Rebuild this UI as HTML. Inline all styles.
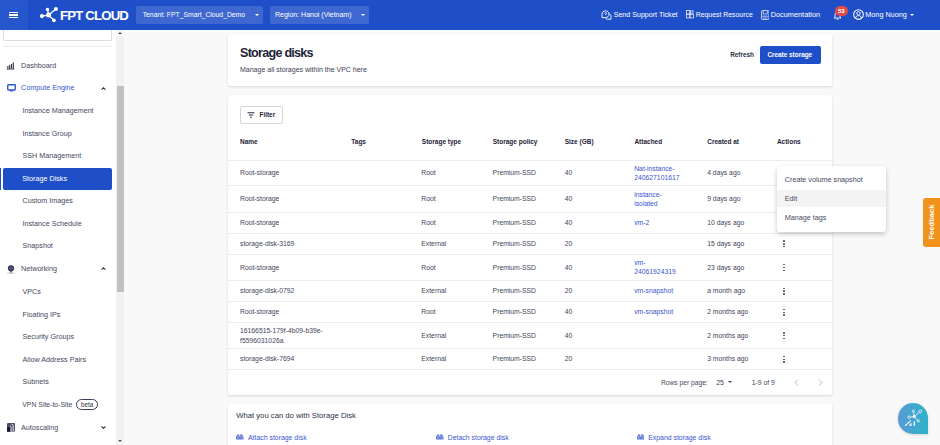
<!DOCTYPE html>
<html><head><meta charset="utf-8">
<style>
*{box-sizing:border-box;margin:0;padding:0}
html,body{width:940px;height:445px;overflow:hidden}
body{position:relative;background:#f9f9f9;font-family:"Liberation Sans",sans-serif;color:#1e2337}
.a{position:absolute}
.t{position:absolute;white-space:nowrap;line-height:10px;height:10px}
#hdr{left:0;top:0;width:940px;height:30px;background:#1f4fc8}
#ham{left:0;top:0;width:28px;height:30px;background:#2656cc}
.hw{color:#fff;font-size:7.1px}
.sel{background:rgba(255,255,255,0.14);border-radius:2px;height:18px;top:5.5px}
#side{left:0;top:30px;width:117px;height:415px;background:#fff}
.si{font-size:7.2px;color:#45485e}
#track{left:116px;top:30px;width:8px;height:415px;background:#f1f1f1}
#thumb{left:116.5px;top:86px;width:7px;height:206px;background:#c1c1c1}
.card{position:absolute;background:#fff;border-radius:2px;box-shadow:0 1px 2.5px rgba(0,0,0,0.14)}
.th{font-size:6.5px;font-weight:700;color:#1e2337}
.td{font-size:6.8px;color:#42455a}
.lk{color:#3a55d0}
.kb{position:absolute;width:2px;height:8px}.kb i{display:block;width:1.5px;height:1.5px;border-radius:50%;background:#4a4d60;margin-bottom:1.3px}
.ln{position:absolute;left:228px;width:604px;height:1px;background:#ececec}
</style></head><body>
<!-- header -->
<div id="hdr" class="a"></div>
<div id="ham" class="a"></div>
<div class="a" style="left:9px;top:11.5px;width:9px;height:1.3px;background:#fff"></div>
<div class="a" style="left:9px;top:14.3px;width:9px;height:1.3px;background:#fff"></div>
<div class="a" style="left:9px;top:17px;width:9px;height:1.3px;background:#fff"></div>
<!-- logo icon -->
<svg class="a" style="left:39px;top:6px" width="20" height="18" viewBox="0 0 20 18">
 <g stroke="#fff" stroke-width="1.3" fill="#fff">
  <line x1="9.6" y1="9.1" x2="2.9" y2="10.1"/><line x1="9.6" y1="9.1" x2="8.5" y2="3.5"/><line x1="9.6" y1="9.1" x2="16.9" y2="2.9"/><line x1="9.6" y1="9.1" x2="14.9" y2="14.3"/>
  <circle cx="9.6" cy="9.1" r="2.5" stroke="none"/><circle cx="2.9" cy="10.1" r="2.05" stroke="none"/><circle cx="8.5" cy="3.5" r="1.7" stroke="none"/><circle cx="16.9" cy="2.9" r="2" stroke="none"/><circle cx="14.9" cy="14.3" r="1.9" stroke="none"/>
 </g>
</svg>
<div class="t" style="left:60px;top:8.8px;font-size:13.2px;line-height:14px;height:14px;font-weight:700;color:#fff;letter-spacing:-0.82px">FPT CLOUD</div>
<div class="a sel" style="left:136px;width:127px"></div>
<div class="t hw" style="left:142.7px;top:9.5px;font-size:6.8px">Tenant: FPT_Smart_Cloud_Demo</div>
<div class="a" style="left:255px;top:13.5px;width:0;height:0;border-left:2.5px solid transparent;border-right:2.5px solid transparent;border-top:2.5px solid #fff"></div>
<div class="a sel" style="left:269.5px;width:99.5px"></div>
<div class="t hw" style="left:275px;top:9.5px;font-size:7px">Region: Hanoi (Vietnam)</div>
<div class="a" style="left:361px;top:13.5px;width:0;height:0;border-left:2.5px solid transparent;border-right:2.5px solid transparent;border-top:2.5px solid #fff"></div>

<div class="t hw" style="left:613.7px;top:9.5px">Send Support Ticket</div>
<div class="t hw" style="left:695.7px;top:9.5px;font-size:6.9px">Request Resource</div>
<div class="t hw" style="left:770.7px;top:9.5px;font-size:7.35px">Documentation</div>
<div class="t hw" style="left:865.3px;top:9.5px;font-size:7.25px">Mong Nuong</div>

<!-- header icons -->
<svg class="a" style="left:600.5px;top:9.5px" width="11" height="10" viewBox="0 0 11 10" fill="none" stroke="#fff" stroke-width="0.9">
 <path d="M1 4.2 C1 2.2 2.6 0.8 4.5 0.8 C6.4 0.8 8 2.2 8 4.2 C8 6.2 6.4 7.6 4.5 7.6 L1 7.6 Z"/>
 <path d="M8.2 3.6 C9.4 4.2 10 5.2 10 6.4 L10 9.2 L6.6 9.2 C5.6 9.2 4.6 8.6 4.2 7.7"/>
 <path d="M3.5 3.4 C3.5 2.6 5.5 2.6 5.5 3.4 C5.5 4.2 4.5 4.2 4.5 5"/>
</svg>
<svg class="a" style="left:685.5px;top:10.3px" width="8" height="8.5" viewBox="0 0 8 8.5" fill="none" stroke="#fff" stroke-width="0.75" opacity="0.92">
 <rect x="0.5" y="0.6" width="3.2" height="3.4"/><rect x="0.5" y="4.3" width="3.2" height="3.6"/><rect x="4.1" y="4.3" width="3.4" height="3.6"/><rect x="4.6" y="0.9" width="2.4" height="2.4"/>
</svg>
<svg class="a" style="left:760.6px;top:9.8px" width="8.5" height="10" viewBox="0 0 8.5 10" opacity="0.92">
 <rect x="0.45" y="0.45" width="7.6" height="9.1" rx="1.4" fill="none" stroke="#fff" stroke-width="0.85"/>
 <path d="M2.2 0.8 V4 H6.3 V0.8" fill="none" stroke="#fff" stroke-width="0.75"/>
 <path d="M0.8 6.2 H7.7 M2 8 H6.5" stroke="#fff" stroke-width="0.7"/>
</svg>
<svg class="a" style="left:833px;top:10.5px" width="9" height="9" viewBox="0 0 9 9" fill="none" stroke="#fff" stroke-width="0.9">
 <path d="M1 7 L2 6 V4 C2 2.5 3 1.5 4.5 1.5 C6 1.5 7 2.5 7 4 V6 L8 7 Z"/><path d="M3.6 8.2 H5.4"/>
</svg>
<div class="a" style="left:835.1px;top:6.2px;width:12.5px;height:9.8px;border-radius:5px;background:#e24a4a"></div>
<div class="t" style="left:841.3px;top:11.1px;font-size:6px;line-height:6px;height:6px;color:#fff;font-weight:700;transform:translate(-50%,-50%)">53</div>
<svg class="a" style="left:852.5px;top:9.2px" width="11" height="11" viewBox="0 0 11 11" fill="none" stroke="#fff" stroke-width="0.9">
 <circle cx="5.5" cy="5.5" r="4.85" stroke-width="1.05"/><circle cx="5.5" cy="4.3" r="1.7"/><path d="M2.6 9 C3 7.4 4 6.6 5.5 6.6 C7 6.6 8 7.4 8.4 9"/>
</svg>
<div class="a" style="left:910.4px;top:13.8px;width:0;height:0;border-left:2.3px solid transparent;border-right:2.3px solid transparent;border-top:2.6px solid #fff"></div>
<div class="a" style="left:124px;top:30px;width:816px;height:2px;background:#fff"></div>
<!-- sidebar -->
<div id="side" class="a"></div>
<div id="track" class="a"></div>
<div id="thumb" class="a"></div>
<div class="a" style="left:3.4px;top:30px;width:108.3px;height:10.7px;border:1px solid #dcdcdc;border-top:none;border-radius:0 0 2px 2px"></div>
<div class="a" style="left:3px;top:45.5px;width:109px;height:1px;background:#ececec"></div>

<div class="t si" style="left:21px;top:61px">Dashboard</div>
<div class="t si" style="left:21px;top:83.4px;color:#3a55d0">Compute Engine</div>
<div class="t si" style="left:22.5px;top:106px">Instance Management</div>
<div class="t si" style="left:22.5px;top:128.5px">Instance Group</div>
<div class="t si" style="left:22.5px;top:151px">SSH Management</div>
<div class="a" style="left:3px;top:167.7px;width:108.7px;height:22.3px;background:#1f4fc8;border-radius:2px"></div>
<div class="a" style="left:0;top:167.7px;width:1px;height:22.3px;background:#1f4fc8"></div>
<div class="t si" style="left:22.3px;top:173.8px;color:#fff">Storage Disks</div>
<div class="t si" style="left:22.5px;top:196px">Custom Images</div>
<div class="t si" style="left:22.5px;top:218.5px">Instance Schedule</div>
<div class="t si" style="left:22.5px;top:241px">Snapshot</div>
<div class="t si" style="left:21px;top:263.7px">Networking</div>
<div class="t si" style="left:22.5px;top:286.6px">VPCs</div>
<div class="t si" style="left:22.5px;top:310px">Floating IPs</div>
<div class="t si" style="left:22.5px;top:331.6px">Security Groups</div>
<div class="t si" style="left:22.5px;top:355px">Allow Address Pairs</div>
<div class="t si" style="left:22.5px;top:376.6px">Subnets</div>
<div class="t si" style="left:22.3px;top:400px;font-size:6.86px">VPN Site-to-Site</div>
<div class="t si" style="left:21px;top:423px">Autoscaling</div>

<!-- sidebar icons -->
<svg class="a" style="left:6.1px;top:61.8px" width="9" height="8" viewBox="0 0 9 8" fill="#3a3d52">
 <rect x="1.3" y="4" width="1.2" height="3"/><rect x="3.1" y="3" width="1.2" height="4"/><rect x="4.9" y="2" width="1.2" height="5"/><rect x="6.7" y="0.5" width="1.2" height="6.5"/><rect x="0.5" y="6.8" width="8" height="0.7"/>
</svg>
<svg class="a" style="left:6.5px;top:83.5px" width="9" height="8" viewBox="0 0 9 8">
 <rect x="0.75" y="0.75" width="7.5" height="5.2" rx="0.6" fill="none" stroke="#2f55d4" stroke-width="1.4"/><rect x="3" y="6.2" width="3" height="1.3" fill="#2f55d4"/>
</svg>
<svg class="a" style="left:101px;top:86.5px" width="5" height="3" viewBox="0 0 5 3"><path d="M0.6 2.6 L2.5 0.8 L4.4 2.6" fill="none" stroke="#2b2f45" stroke-width="1.1"/></svg>
<svg class="a" style="left:7px;top:264.5px" width="8" height="9" viewBox="0 0 8 9">
 <circle cx="4" cy="3.3" r="3.1" fill="#2d3150"/><path d="M4 1 V6 M1.5 3.3 H6.5" stroke="#8a8fa8" stroke-width="0.5"/><rect x="3.5" y="6" width="1" height="1.8" fill="#2d3150"/><rect x="0.2" y="7.8" width="7.6" height="0.6" fill="#9a9db0"/>
</svg>
<svg class="a" style="left:101px;top:266.5px" width="5" height="3" viewBox="0 0 5 3"><path d="M0.6 2.6 L2.5 0.8 L4.4 2.6" fill="none" stroke="#2b2f45" stroke-width="1.1"/></svg>
<div class="a" style="left:76.2px;top:398.9px;width:21.5px;height:11.5px;border:0.8px solid #3a3d52;border-radius:6px"></div>
<div class="t" style="left:81px;top:400px;font-size:6.3px;color:#2b2f45">beta</div>
<svg class="a" style="left:7px;top:423px" width="8" height="9" viewBox="0 0 8 9">
 <rect x="0" y="0" width="8" height="8.8" rx="1.1" fill="#4d5068"/>
 <rect x="0" y="4" width="3.2" height="4.8" rx="0.5" fill="#151833"/>
 <path d="M4.1 8.6 V4.4 Q4.1 3.1 3 3.1 M6.2 8.6 V2.6 Q6.2 1.2 4.6 1.2" fill="none" stroke="#fff" stroke-width="0.85"/>
</svg>
<svg class="a" style="left:100.8px;top:425.8px" width="5" height="3" viewBox="0 0 5 3"><path d="M0.6 0.5 L2.5 2.3 L4.4 0.5" fill="none" stroke="#2b2f45" stroke-width="1.1"/></svg>
<div class="a" style="left:117.5px;top:440px;width:0;height:0;border-left:2px solid transparent;border-right:2px solid transparent;border-top:2.5px solid #555"></div>
<div class="a" style="left:116px;top:30px;width:8px;height:7px;background:#f7f7f7"></div>
<div class="a" style="left:117.5px;top:31.6px;width:0;height:0;border-left:2px solid transparent;border-right:2px solid transparent;border-bottom:2.5px solid #505050"></div>
<!-- card 1 -->
<div class="card" style="left:228px;top:34.2px;width:604px;height:51.8px"></div>
<div class="t" style="left:240px;top:46px;font-size:12.6px;line-height:14px;height:14px;font-weight:700;letter-spacing:-0.75px;color:#1e2337">Storage disks</div>
<div class="t" style="left:240px;top:64.5px;font-size:7px;color:#3a3d52">Manage all storages within the VPC here</div>
<div class="t" style="left:730.2px;top:49.5px;font-size:6.4px;font-weight:700;color:#2b2f45">Refresh</div>
<div class="a" style="left:759.6px;top:46.1px;width:61.1px;height:17.8px;background:#1f4fc8;border-radius:2px"></div>
<div class="t" style="left:767.4px;top:49.5px;font-size:6.4px;font-weight:700;color:#fff">Create storage</div>

<!-- card 2 -->
<div class="card" style="left:228px;top:95px;width:604px;height:300px"></div>
<div class="a" style="left:240.3px;top:106.2px;width:42.6px;height:17.9px;border:1px solid #d6d6d6;border-radius:2px;background:#fff"></div>
<div class="t" style="left:259.5px;top:109.8px;font-size:6.4px;font-weight:700">Filter</div>

<svg class="a" style="left:246.8px;top:111.8px" width="8" height="6" viewBox="0 0 8 6" stroke="#2b2f45" stroke-width="1.05"><path d="M0.5 0.8 H7.5 M1.8 3 H6.2 M3.1 5.2 H4.9"/></svg>
<div class="t th" style="left:240px;top:136.8px">Name</div>
<div class="t th" style="left:351.3px;top:136.8px">Tags</div>
<div class="t th" style="left:421.8px;top:136.8px">Storage type</div>
<div class="t th" style="left:492.7px;top:136.8px">Storage policy</div>
<div class="t th" style="left:564.7px;top:136.8px">Size (GB)</div>
<div class="t th" style="left:634.4px;top:136.8px">Attached</div>
<div class="t th" style="left:707.2px;top:136.8px">Created at</div>
<div class="t th" style="left:776.9px;top:136.8px">Actions</div>

<div class="ln" style="top:159.7px"></div>
<div class="ln" style="top:185.2px"></div>
<div class="ln" style="top:211.6px"></div>
<div class="ln" style="top:232.5px"></div>
<div class="ln" style="top:253.7px"></div>
<div class="ln" style="top:279.8px"></div>
<div class="ln" style="top:301px"></div>
<div class="ln" style="top:322.2px"></div>
<div class="ln" style="top:347.8px"></div>
<div class="ln" style="top:369.3px"></div>
<!--ROWS-->
<div class="t td" style="left:240px;top:168.35px">Root-storage</div>
<div class="t td" style="left:421.3px;top:168.35px">Root</div>
<div class="t td" style="left:492.6px;top:168.35px">Premium-SSD</div>
<div class="t td" style="left:564.8px;top:168.35px">40</div>
<div class="t td lk" style="left:634.2px;top:163.65px">Nat-instance-</div>
<div class="t td lk" style="left:634.2px;top:173.05px">240627101617</div>
<div class="t td" style="left:707.2px;top:168.35px">4 days ago</div>
<div class="t td" style="left:240px;top:194.30px">Root-storage</div>
<div class="t td" style="left:421.3px;top:194.30px">Root</div>
<div class="t td" style="left:492.6px;top:194.30px">Premium-SSD</div>
<div class="t td" style="left:564.8px;top:194.30px">40</div>
<div class="t td lk" style="left:634.2px;top:189.60px">instance-</div>
<div class="t td lk" style="left:634.2px;top:199.00px">isolated</div>
<div class="t td" style="left:707.2px;top:194.30px">9 days ago</div>
<div class="t td" style="left:240px;top:217.85px">Root-storage</div>
<div class="t td" style="left:421.3px;top:217.85px">Root</div>
<div class="t td" style="left:492.6px;top:217.85px">Premium-SSD</div>
<div class="t td" style="left:564.8px;top:217.85px">40</div>
<div class="t td lk" style="left:634.2px;top:217.85px">vm-2</div>
<div class="t td" style="left:707.2px;top:217.85px">10 days ago</div>
<div class="t td" style="left:240px;top:238.85px">storage-disk-3169</div>
<div class="t td" style="left:421.3px;top:238.85px">External</div>
<div class="t td" style="left:492.6px;top:238.85px">Premium-SSD</div>
<div class="t td" style="left:564.8px;top:238.85px">20</div>
<div class="t td" style="left:707.2px;top:238.85px">15 days ago</div>
<div class="kb" style="left:783px;top:240.25px"><i></i><i></i><i></i></div>
<div class="t td" style="left:240px;top:262.55px">Root-storage</div>
<div class="t td" style="left:421.3px;top:262.55px">Root</div>
<div class="t td" style="left:492.6px;top:262.55px">Premium-SSD</div>
<div class="t td" style="left:564.8px;top:262.55px">40</div>
<div class="t td lk" style="left:634.2px;top:257.85px">vm-</div>
<div class="t td lk" style="left:634.2px;top:267.25px">24061924319</div>
<div class="t td" style="left:707.2px;top:262.55px">23 days ago</div>
<div class="kb" style="left:783px;top:263.95px"><i></i><i></i><i></i></div>
<div class="t td" style="left:240px;top:286.25px">storage-disk-0792</div>
<div class="t td" style="left:421.3px;top:286.25px">External</div>
<div class="t td" style="left:492.6px;top:286.25px">Premium-SSD</div>
<div class="t td" style="left:564.8px;top:286.25px">20</div>
<div class="t td lk" style="left:634.2px;top:286.25px">vm-snapshot</div>
<div class="t td" style="left:707.2px;top:286.25px">a month ago</div>
<div class="kb" style="left:783px;top:287.65px"><i></i><i></i><i></i></div>
<div class="t td" style="left:240px;top:307.45px">Root-storage</div>
<div class="t td" style="left:421.3px;top:307.45px">Root</div>
<div class="t td" style="left:492.6px;top:307.45px">Premium-SSD</div>
<div class="t td" style="left:564.8px;top:307.45px">40</div>
<div class="t td lk" style="left:634.2px;top:307.45px">vm-snapshot</div>
<div class="t td" style="left:707.2px;top:307.45px">2 months ago</div>
<div class="kb" style="left:783px;top:308.85px"><i></i><i></i><i></i></div>
<div class="t td" style="left:240px;top:326.10px">16166515-179f-4b09-b39e-</div>
<div class="t td" style="left:240px;top:335.50px">f5596031026a</div>
<div class="t td" style="left:421.3px;top:330.80px">External</div>
<div class="t td" style="left:492.6px;top:330.80px">Premium-SSD</div>
<div class="t td" style="left:564.8px;top:330.80px">40</div>
<div class="t td" style="left:707.2px;top:330.80px">2 months ago</div>
<div class="kb" style="left:783px;top:332.20px"><i></i><i></i><i></i></div>
<div class="t td" style="left:240px;top:354.35px">storage-disk-7694</div>
<div class="t td" style="left:421.3px;top:354.35px">External</div>
<div class="t td" style="left:492.6px;top:354.35px">Premium-SSD</div>
<div class="t td" style="left:564.8px;top:354.35px">20</div>
<div class="t td" style="left:707.2px;top:354.35px">3 months ago</div>
<div class="kb" style="left:783px;top:355.75px"><i></i><i></i><i></i></div>
<!--/ROWS-->

<!-- card 3 -->
<div class="card" style="left:228px;top:403.5px;width:604px;height:60px"></div>
<div class="t" style="left:236.2px;top:410.5px;font-size:7.7px;color:#2b2f45">What you can do with Storage Disk</div>
<svg class="a" style="left:236px;top:433.6px" width="7.5" height="6" viewBox="0 0 7.5 6"><path d="M0.4 2.6 L1.2 0.4 H3.3 V2.6 Z M4.2 2.6 V0.4 H6.3 L7.1 2.6 Z" fill="#5b76d8"/><rect x="0" y="2.6" width="7.5" height="3" rx="0.5" fill="#5b76d8"/><path d="M1 4 H2.6 M4.9 4 H6.5" stroke="#fff" stroke-width="0.6"/></svg>
<div class="t lk" style="left:248px;top:432.5px;font-size:6.9px">Attach storage disk</div>
<svg class="a" style="left:436.3px;top:433.6px" width="7.5" height="6" viewBox="0 0 7.5 6"><path d="M0.4 2.6 L1.2 0.4 H3.3 V2.6 Z M4.2 2.6 V0.4 H6.3 L7.1 2.6 Z" fill="#5b76d8"/><rect x="0" y="2.6" width="7.5" height="3" rx="0.5" fill="#5b76d8"/><path d="M1 4 H2.6 M4.9 4 H6.5" stroke="#fff" stroke-width="0.6"/></svg>
<div class="t lk" style="left:447.8px;top:432.5px;font-size:6.9px">Detach storage disk</div>
<svg class="a" style="left:636.5px;top:433.6px" width="7.5" height="6" viewBox="0 0 7.5 6"><path d="M0.4 2.6 L1.2 0.4 H3.3 V2.6 Z M4.2 2.6 V0.4 H6.3 L7.1 2.6 Z" fill="#5b76d8"/><rect x="0" y="2.6" width="7.5" height="3" rx="0.5" fill="#5b76d8"/><path d="M1 4 H2.6 M4.9 4 H6.5" stroke="#fff" stroke-width="0.6"/></svg>
<div class="t lk" style="left:648.2px;top:432.5px;font-size:6.9px">Expand storage disk</div>
<!-- pagination -->
<div class="t td" style="left:660.9px;top:377.9px;font-size:6.7px;color:#45485e">Rows per page:</div>
<div class="t td" style="left:716.2px;top:377.9px;font-size:6.9px">25</div>
<div class="a" style="left:727.5px;top:381.3px;width:0;height:0;border-left:2.3px solid transparent;border-right:2.3px solid transparent;border-top:2.3px solid #3a3d52"></div>
<div class="t td" style="left:751.7px;top:377.9px;font-size:6.8px">1-9 of 9</div>
<svg class="a" style="left:794px;top:379px" width="5" height="7" viewBox="0 0 5 7"><path d="M4 0.5 L1 3.5 L4 6.5" fill="none" stroke="#b8b8b8" stroke-width="0.9"/></svg>
<svg class="a" style="left:818px;top:379px" width="5" height="7" viewBox="0 0 5 7"><path d="M1 0.5 L4 3.5 L1 6.5" fill="none" stroke="#b8b8b8" stroke-width="0.9"/></svg>
<!-- dropdown menu -->
<div class="a" style="left:776.5px;top:165.6px;width:109.2px;height:66.1px;background:#fff;border-radius:3px;box-shadow:0 2px 5px rgba(0,0,0,0.22)"></div>
<div class="a" style="left:776.5px;top:190.4px;width:109.2px;height:16.5px;background:#f4f4f4"></div>
<div class="t" style="left:784.8px;top:175.3px;font-size:7.2px;color:#45485e">Create volume snapshot</div>
<div class="t" style="left:784.8px;top:194.3px;font-size:7.2px;color:#45485e">Edit</div>
<div class="t" style="left:784.8px;top:212.7px;font-size:7.2px;color:#45485e">Manage tags</div>
<!-- feedback -->
<div class="a" style="left:923.2px;top:197.6px;width:17px;height:49.2px;background:#f0921c;border-radius:3px 0 0 3px"></div>
<div class="t" style="left:931.9px;top:222.2px;font-size:7.6px;font-weight:700;color:#fff;transform:translate(-50%,-50%) rotate(-90deg);transform-origin:50% 50%">Feedback</div>
<!-- AI button -->
<div class="a" style="left:898px;top:403px;width:30px;height:30.5px;border-radius:15px 15px 0 15px;background:linear-gradient(90deg,#5a9ad6,#2db2c9);box-shadow:0 1px 3px rgba(0,0,0,0.15)"></div>
<svg class="a" style="left:898px;top:403px" width="30" height="30" viewBox="0 0 30 30" fill="none" stroke="#fff" stroke-width="0.75">
 <path d="M16.2 13.5 L15.5 9.3 M16.2 13.5 L21.2 9.3 M16.2 13.5 L12.4 14.1 M16.2 13.5 L19.3 17"/>
 <circle cx="16.2" cy="13.5" r="1.2" fill="#fff"/><circle cx="15.5" cy="8.2" r="1.1"/><circle cx="22.3" cy="8.4" r="1.4"/><circle cx="11.1" cy="14.2" r="1.3"/><circle cx="20.2" cy="17.9" r="1.2"/>
 <path d="M6.6 22.6 L12.4 17.2 L13.4 17.6 L7.8 22.9 Z M10.8 22.8 L13.3 19.6 L13.6 22.8 Z M15.6 22.8 V18.6 L16.9 18.2 V22.8 Z" fill="#fff" stroke="none"/>
</svg>
</body></html>
